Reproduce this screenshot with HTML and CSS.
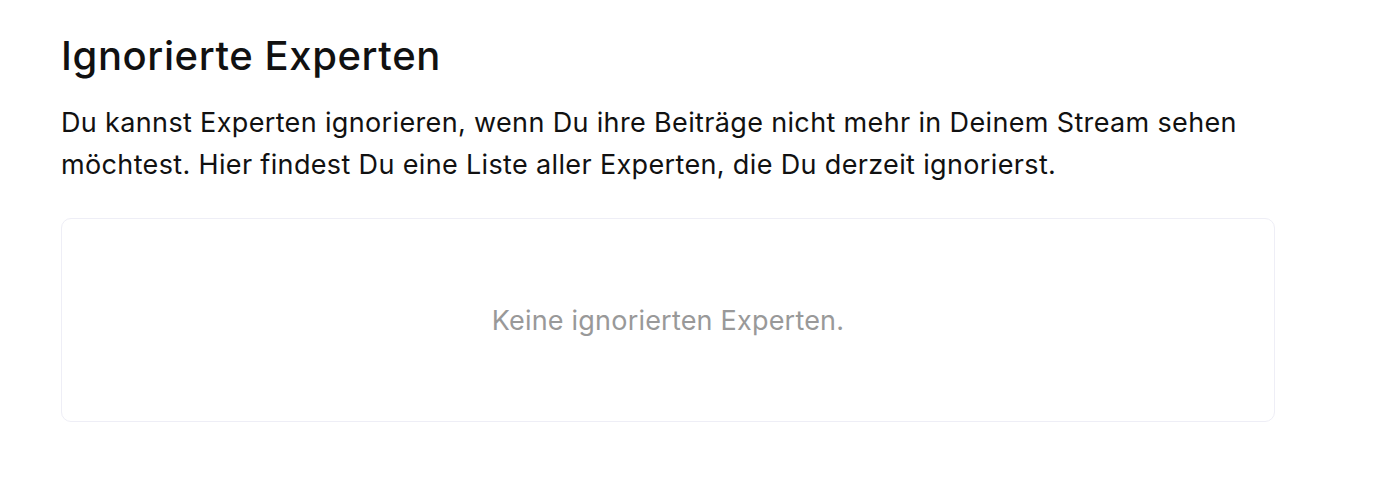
FILE: index.html
```html
<!DOCTYPE html>
<html lang="de">
<head>
<meta charset="utf-8">
<title>Ignorierte Experten</title>
<link rel="stylesheet" href="styles.css">
</head>
<body>
<main class="page">
  <h1 class="title">Ignorierte Experten</h1>
  <p class="intro">Du kannst Experten ignorieren, wenn Du ihre Beiträge nicht mehr in Deinem Stream sehen möchtest. Hier findest Du eine Liste aller Experten, die Du derzeit ignorierst.</p>
  <section class="empty-box">
    <span class="empty-text">Keine ignorierten Experten.</span>
  </section>
</main>
</body>
</html>
```

FILE: styles.css
```css
html, body {
  margin: 0;
  padding: 0;
  background: #ffffff;
}
body {
  font-family: Inter, "Noto Sans", sans-serif;
  color: #111111;
}
.page {
  width: 1214px;
  padding: 32px 0 0 61px;
  display: flex;
  flex-direction: column;
}
.title {
  margin: 0;
  font-size: 40px;
  font-weight: 500;
  line-height: 48px;
  letter-spacing: 0.6px;
}
.intro {
  margin: 22px 0 0 0;
  font-size: 27px;
  line-height: 42px;
  font-weight: 400;
  letter-spacing: 0.35px;
}
.empty-box {
  box-sizing: border-box;
  margin-top: 32px;
  height: 204px;
  border: 1px solid #eeeef6;
  border-radius: 10px;
  display: flex;
  align-items: center;
  justify-content: center;
}
.empty-text {
  font-size: 27px;
  letter-spacing: 0.2px;
  color: #999999;
}
```
